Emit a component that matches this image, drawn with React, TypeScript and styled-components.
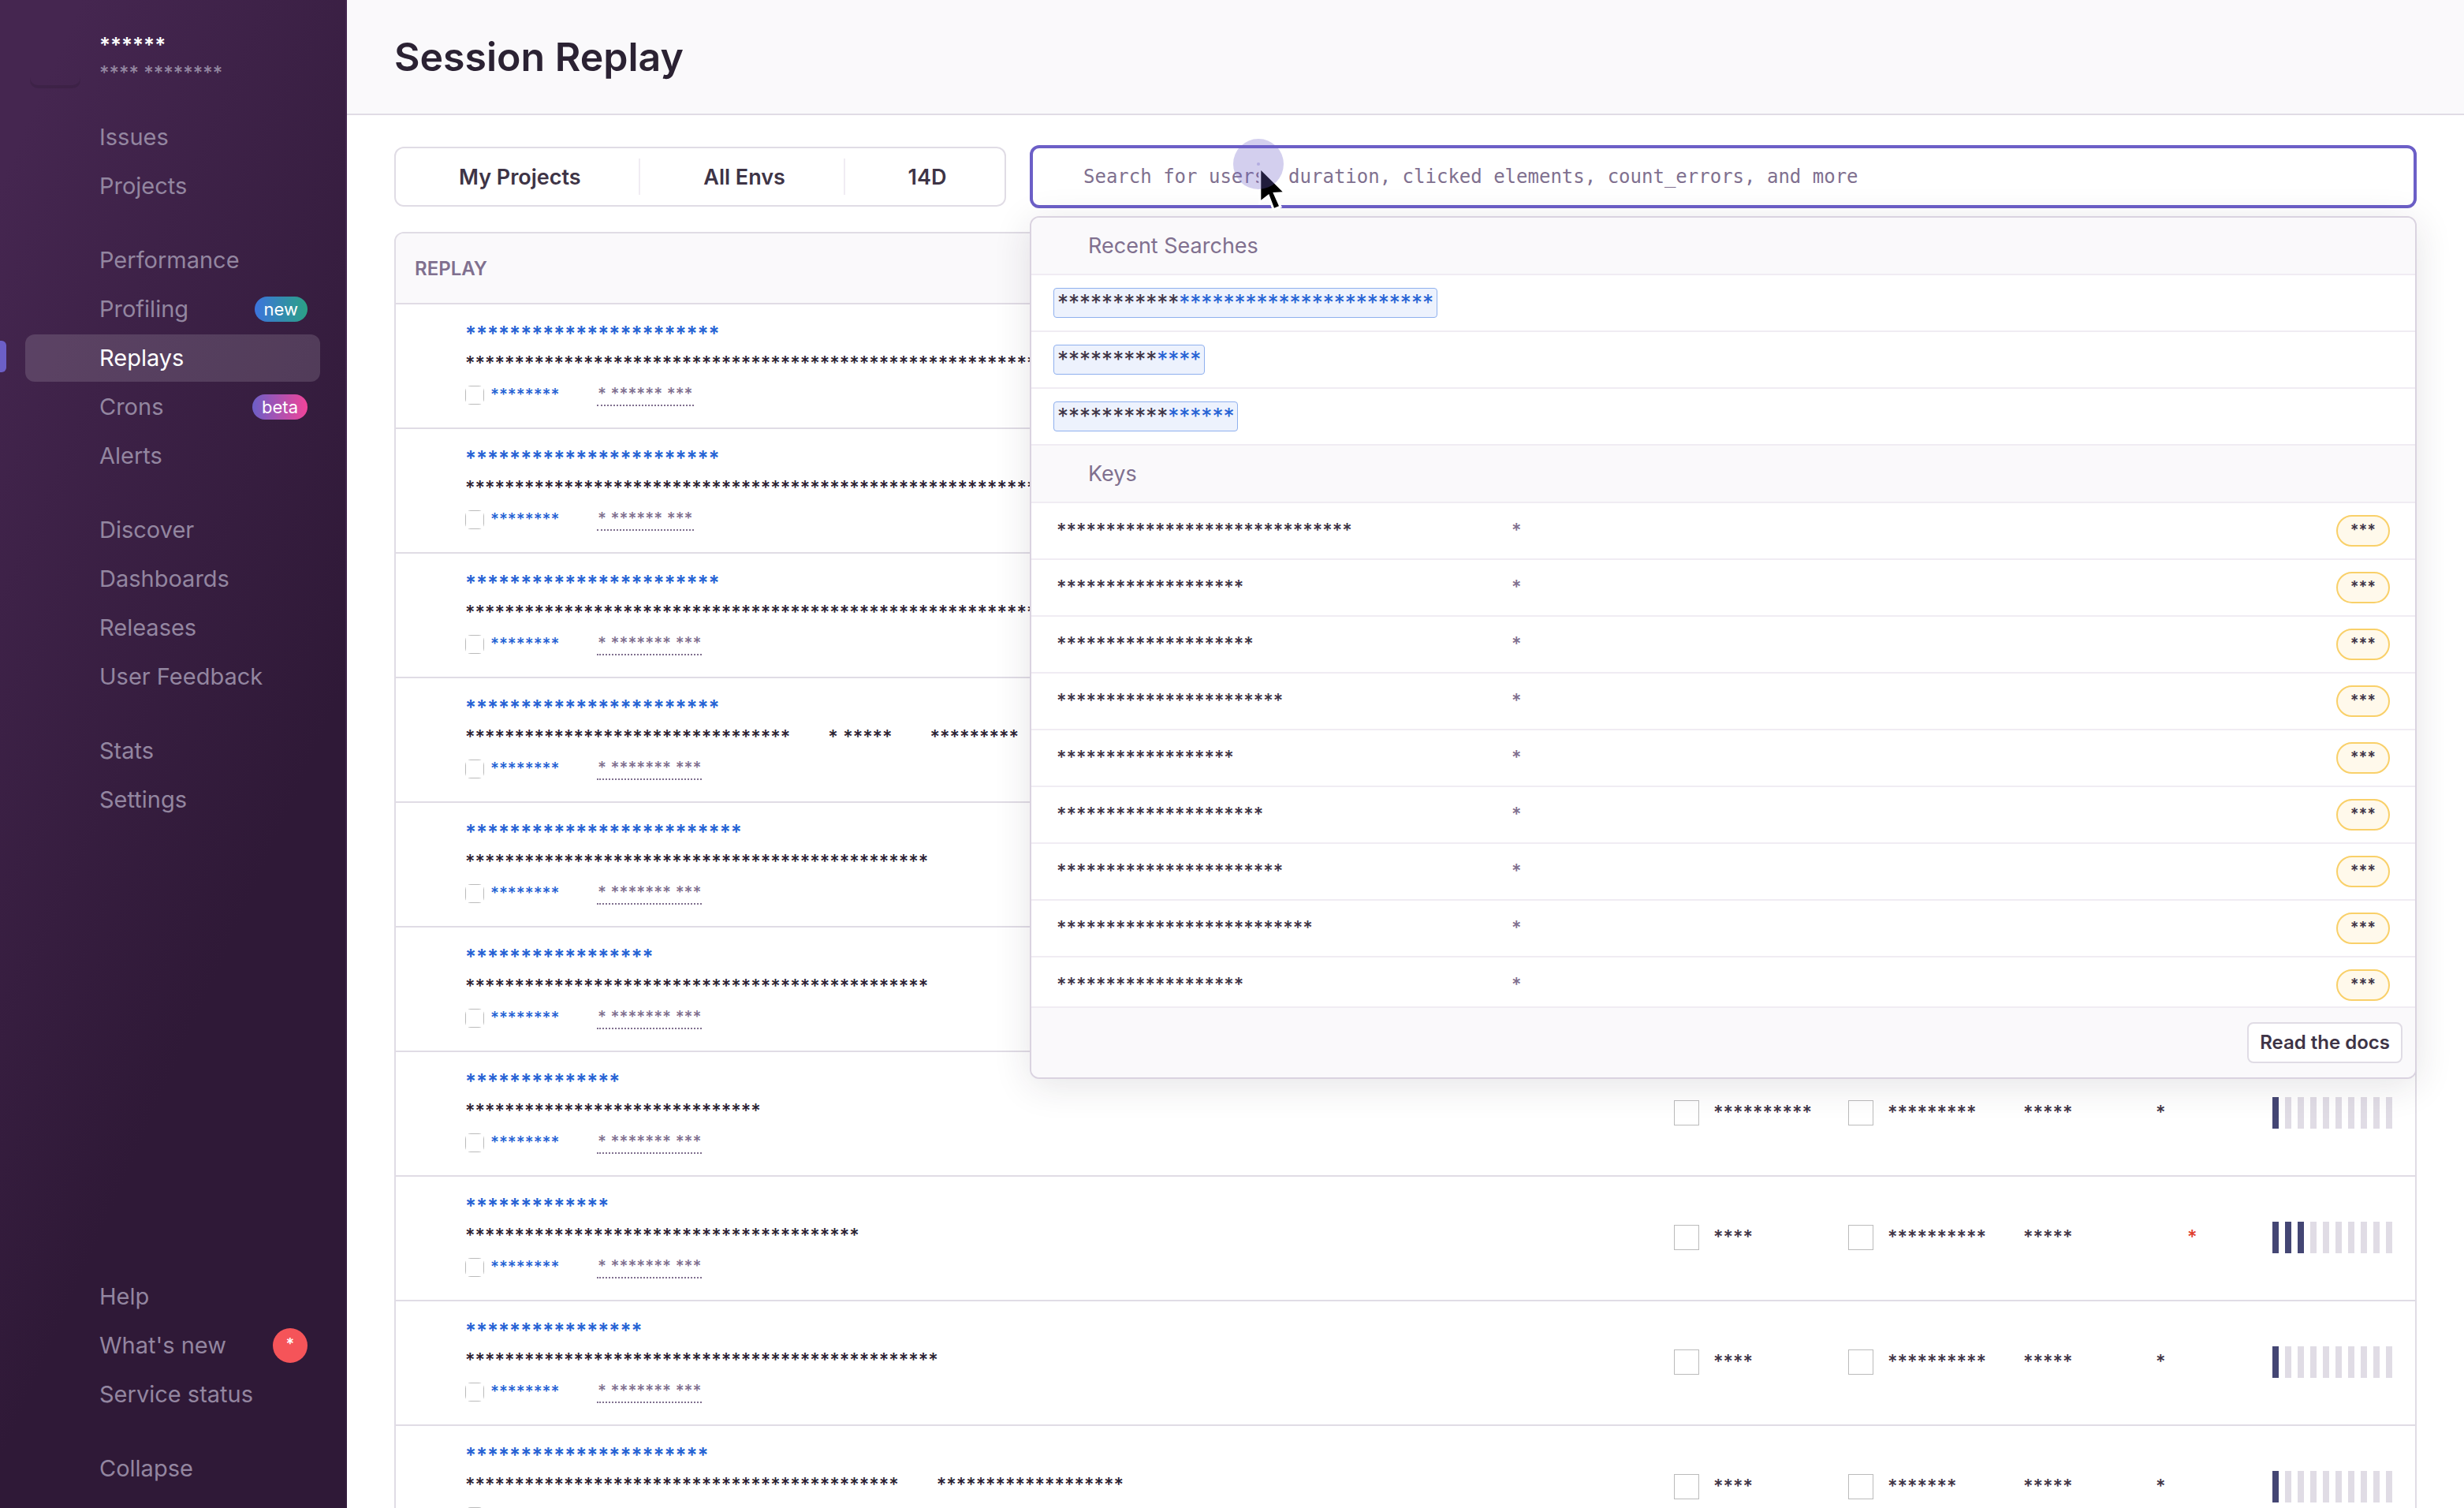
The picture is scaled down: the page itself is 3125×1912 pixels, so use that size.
import React from 'react';
import styled, { createGlobalStyle, css } from 'styled-components';

const sans = `Inter, "Open Sans", sans-serif`;
const mono = `"DejaVu Sans Mono", "Liberation Mono", monospace`;

const c = {
  border: '#e0dce5',
  innerBorder: '#f0ecf3',
  surface: '#faf9fb',
  heading: '#2b2233',
  text: '#3e3446',
  sub: '#80708f',
  link: '#2562d4',
  purple: '#6c5fc7',
  nav: '#9386a0',
};

const GlobalStyle = createGlobalStyle`
  *, *::before, *::after { box-sizing: border-box; }
  body { margin: 0; background: #fff; color: ${c.text}; font-family: ${sans}; }
  button, input { font: inherit; color: inherit; }
  a { color: inherit; text-decoration: none; }
  p, h1, h2, ul { margin: 0; padding: 0; }
`;

const Shell = styled.div`
  display: flex;
  height: 100vh;
  overflow: hidden;
`;

/* Sidebar */

const Sidebar = styled.aside`
  flex: 0 0 440px;
  display: flex;
  flex-direction: column;
  padding-bottom: 20px;
  border-right: 2px solid #45265044;
  background: linear-gradient(294deg, #2f1937 36%, #452650 92%);
`;

const Org = styled.div`
  display: flex;
  gap: 24px;
  height: 144px;
  padding: 36px 38px 0;
`;

const OrgAvatar = styled.div`
  width: 64px;
  height: 64px;
  margin-top: 8px;
  border-radius: 10px;
  box-shadow: 0 4px 0 rgba(0, 0, 0, 0.1);
`;

const NavGroup = styled.nav<{ $bottom?: boolean }>`
  display: flex;
  flex-direction: column;
  gap: 2px;
  padding: 0 32px;
  margin-bottom: 34px;
  ${(p) => p.$bottom && css`margin-top: auto;`}
  &:last-child { margin-bottom: 0; }
`;

const NavLink = styled.a<{ $active?: boolean }>`
  position: relative;
  display: flex;
  align-items: center;
  justify-content: space-between;
  height: 60px;
  padding: 0 16px 0 94px;
  border-radius: 12px;
  font-size: 29px;
  line-height: 36px;
  color: ${(p) => (p.$active ? '#fff' : c.nav)};
  background: ${(p) => (p.$active ? 'rgba(255, 255, 255, 0.14)' : 'transparent')};
  ${(p) => p.$active && css`
    &::before {
      content: '';
      position: absolute;
      left: -32px;
      top: 8px;
      width: 8px;
      height: 40px;
      border-radius: 0 6px 6px 0;
      background: ${c.purple};
    }
  `}
`;

const Badge = styled.span<{ $kind: 'new' | 'beta' }>`
  padding: 0 12px;
  border-radius: 16px;
  font-size: 22px;
  line-height: 32px;
  color: #fff;
  background: ${(p) => (p.$kind === 'new'
    ? 'linear-gradient(90deg, #3c74dd, #2ba185)'
    : 'linear-gradient(90deg, #6c5fc7, #f14499)')};
`;

const Count = styled.span`
  width: 44px;
  height: 44px;
  border-radius: 22px;
  font-size: 20px;
  font-weight: 600;
  line-height: 40px;
  text-align: center;
  color: #fff;
  background: #f55459;
`;

/* Masked text */

const Stars = styled.span<{ $size?: number; $weight?: number; $color?: string; $line?: number }>`
  font-size: ${(p) => p.$size ?? 24}px;
  font-weight: ${(p) => p.$weight ?? 500};
  line-height: ${(p) => p.$line ?? 38}px;
  color: ${(p) => p.$color ?? c.text};
  white-space: pre;
`;

/* Page */

const Main = styled.main`
  flex: 1;
  min-width: 0;
`;

const PageHeader = styled.header`
  display: flex;
  align-items: center;
  height: 146px;
  padding: 0 60px;
  border-bottom: 2px solid ${c.border};
  background: ${c.surface};
`;

const Title = styled.h1`
  font-size: 50px;
  font-weight: 600;
  line-height: 60px;
  color: ${c.heading};
`;

const Body = styled.div`
  padding: 38px 60px 0;
`;

const Controls = styled.div`
  display: flex;
  align-items: center;
  gap: 30px;
  margin-bottom: 30px;
`;

const FilterBar = styled.div`
  flex: 0 0 776px;
  display: flex;
  align-items: center;
  height: 76px;
  border: 2px solid ${c.border};
  border-radius: 12px;
`;

const FilterButton = styled.button`
  flex: 1 1 auto;
  height: 100%;
  padding: 0 68px 0 80px;
  border: 0;
  background: none;
  font-size: 27px;
  font-weight: 600;
  text-align: left;
  white-space: nowrap;
`;

const Divider = styled.span`
  width: 2px;
  height: 46px;
  background: ${c.innerBorder};
`;

const SearchBox = styled.div`
  position: relative;
  flex: 1;
`;

const SearchInput = styled.input`
  display: block;
  width: 100%;
  height: 80px;
  padding: 0 64px;
  border: 4px solid ${c.purple};
  border-radius: 12px;
  outline: 0;
  background: #fff;
  font-family: ${mono};
  font-size: 24px;
  &::placeholder { color: ${c.sub}; opacity: 1; }
`;

const Pointer = styled.svg`
  position: absolute;
  z-index: 3;
  left: 258px;
  top: -8px;
  width: 72px;
  height: 96px;
  pointer-events: none;
`;

const Dropdown = styled.div`
  position: absolute;
  z-index: 2;
  top: 90px;
  left: 0;
  right: 0;
  overflow: hidden;
  border: 2px solid #dad3e0;
  border-radius: 12px;
  background: #fff;
  box-shadow: 0 8px 48px rgba(43, 34, 51, 0.12);
`;

const Results = styled.div`
  max-height: 1000px;
  overflow: hidden;
`;

const GroupTitle = styled.h2`
  height: 73px;
  padding: 0 72px;
  border-bottom: 2px solid ${c.innerBorder};
  background: ${c.surface};
  font-size: 27px;
  font-weight: 400;
  line-height: 71px;
  color: ${c.sub};
`;

const List = styled.ul`
  list-style: none;
`;

const ResultRow = styled.li`
  display: grid;
  grid-template-columns: 577px 1fr auto;
  align-items: center;
  height: 72px;
  padding: 0 32px;
  border-bottom: 2px solid ${c.innerBorder};
`;

const RecentRow = styled.li`
  display: flex;
  align-items: center;
  height: 72px;
  padding: 0 28px;
  border-bottom: 2px solid ${c.innerBorder};
`;

const Token = styled.span`
  padding: 0 4px;
  border: 1px solid #8fb0ee;
  border-radius: 4px;
  background: #edf2fd;
  font-size: 28px;
  line-height: 36px;
  color: ${c.text};
  b { font-weight: 400; color: ${c.link}; }
`;

const Tag = styled.span`
  height: 40px;
  padding: 0 16px;
  border: 2px solid #f9d069;
  border-radius: 20px;
  background: #fff9eb;
  font-size: 20px;
  font-weight: 600;
  line-height: 34px;
`;

const DropdownFooter = styled.div`
  display: flex;
  justify-content: flex-end;
  padding: 18px 16px;
  border-top: 2px solid ${c.innerBorder};
  background: ${c.surface};
`;

const DocsButton = styled.a`
  padding: 0 14px;
  border: 2px solid ${c.border};
  border-radius: 8px;
  background: #fff;
  font-size: 24px;
  font-weight: 600;
  line-height: 48px;
`;

/* Replay table */

const TableFrame = styled.div`
  overflow: hidden;
  border: 2px solid ${c.border};
  border-radius: 12px 12px 0 0;
`;

const Table = styled.table`
  width: 100%;
  table-layout: fixed;
  border-collapse: separate;
  border-spacing: 0;
`;

const Th = styled.th<{ $w?: number }>`
  ${(p) => p.$w && css`width: ${p.$w}px;`}
  height: 90px;
  padding: 0 24px;
  border-bottom: 2px solid ${c.border};
  background: ${c.surface};
  font-size: 24px;
  font-weight: 600;
  text-align: left;
  color: ${c.sub};
`;

const Td = styled.td`
  height: 158px;
  padding: 0 24px 2px;
  border-bottom: 2px solid ${c.border};
  vertical-align: middle;
`;

const Replay = styled.div`
  display: flex;
  flex-direction: column;
  align-items: flex-start;
  padding-left: 64px;
`;

const Line = styled.div<{ $gap: number; $h: number }>`
  display: flex;
  align-items: center;
  gap: ${(p) => p.$gap}px;
  height: ${(p) => p.$h}px;
`;

const ProjectMark = styled.span`
  width: 24px;
  height: 24px;
  margin-right: 8px;
  border-radius: 7px;
  overflow: hidden;
  &::before {
    content: '';
    display: block;
    height: 100%;
    border: 1px solid #bbb;
  }
`;

const Project = styled.span`
  display: flex;
  align-items: center;
  width: 143px;
`;

const When = styled.time`
  padding: 0 1px;
  border-bottom: 2px dotted ${c.sub};
  font-size: 21px;
  font-weight: 500;
  line-height: 26px;
  color: ${c.sub};
`;

const Device = styled.span`
  display: flex;
  align-items: center;
  gap: 18px;
`;

const DeviceIcon = styled.span`
  flex: none;
  width: 32px;
  height: 32px;
  border: 1px solid #bbb;
`;

const Errors = styled.span<{ $alert?: boolean }>`
  display: block;
  padding-left: ${(p) => (p.$alert ? 40 : 0)}px;
`;

const Meter = styled.div`
  display: flex;
  gap: 8px;
`;

const Bar = styled.span<{ $on: boolean }>`
  width: 8px;
  height: 40px;
  background: ${(p) => (p.$on ? '#444674' : c.border)};
`;

type Row = {
  title: number;
  parts: string[];
  when: string;
  os: number;
  browser: number;
  alert?: boolean;
  activity: number;
};

const s = (n: number) => '*'.repeat(n);
const short = '* ****** ***';
const long = '* ******* ***';

const rows: Row[] = [
  { title: 23, parts: [s(58)], when: short, os: 4, browser: 10, activity: 1 },
  { title: 23, parts: [s(58)], when: short, os: 4, browser: 10, activity: 1 },
  { title: 23, parts: [s(58)], when: long, os: 4, browser: 10, activity: 1 },
  { title: 23, parts: [s(33), '* *****', s(9)], when: long, os: 4, browser: 10, activity: 1 },
  { title: 25, parts: [s(47)], when: long, os: 4, browser: 10, activity: 1 },
  { title: 17, parts: [s(47)], when: long, os: 4, browser: 10, activity: 1 },
  { title: 14, parts: [s(30)], when: long, os: 10, browser: 9, activity: 1 },
  { title: 13, parts: [s(40)], when: long, os: 4, browser: 10, alert: true, activity: 3 },
  { title: 16, parts: [s(48)], when: long, os: 4, browser: 10, activity: 1 },
  { title: 22, parts: [s(44), s(19)], when: long, os: 4, browser: 7, activity: 1 },
];

const recent = [[11, 23], [9, 4], [10, 6]];
const keys = [30, 19, 20, 23, 18, 21, 23, 26, 19];

type NavEntry = { label: string; badge?: 'new' | 'beta'; count?: string; active?: boolean };

const groups: NavEntry[][] = [
  [{ label: 'Issues' }, { label: 'Projects' }],
  [
    { label: 'Performance' },
    { label: 'Profiling', badge: 'new' },
    { label: 'Replays', active: true },
    { label: 'Crons', badge: 'beta' },
    { label: 'Alerts' },
  ],
  [{ label: 'Discover' }, { label: 'Dashboards' }, { label: 'Releases' }, { label: 'User Feedback' }],
  [{ label: 'Stats' }, { label: 'Settings' }],
];

const bottomGroups: NavEntry[][] = [
  [{ label: 'Help' }, { label: "What's new", count: '*' }, { label: 'Service status' }],
  [{ label: 'Collapse' }],
];

function Group({ entries, bottom }: { entries: NavEntry[]; bottom?: boolean }) {
  return (
    <NavGroup $bottom={bottom}>
      {entries.map((e) => (
        <NavLink key={e.label} href="#" $active={e.active}>
          {e.label}
          {e.badge && <Badge $kind={e.badge}>{e.badge}</Badge>}
          {e.count && <Count>{e.count}</Count>}
        </NavLink>
      ))}
    </NavGroup>
  );
}

function ReplayRow({ row }: { row: Row }) {
  return (
    <tr>
      <Td>
        <Replay>
          <Stars as="a" href="#" $size={26} $weight={600} $color={c.link}>{s(row.title)}</Stars>
          <Line $gap={48} $h={38}>
            {row.parts.map((p, i) => <Stars key={i} $color={c.heading}>{p}</Stars>)}
          </Line>
          <Line $gap={24} $h={42}>
            <Project>
              <ProjectMark />
              <Stars as="a" href="#" $size={21} $color={c.link}>{s(8)}</Stars>
            </Project>
            <When>{row.when}</When>
          </Line>
        </Replay>
      </Td>
      <Td><Device><DeviceIcon /><Stars>{s(row.os)}</Stars></Device></Td>
      <Td><Device><DeviceIcon /><Stars>{s(row.browser)}</Stars></Device></Td>
      <Td><Stars>{s(5)}</Stars></Td>
      <Td>
        <Errors $alert={row.alert}>
          <Stars $color={row.alert ? '#e03e2f' : c.text}>*</Stars>
        </Errors>
      </Td>
      <Td>
        <Meter>
          {Array.from({ length: 10 }, (_, i) => <Bar key={i} $on={i < row.activity} />)}
        </Meter>
      </Td>
    </tr>
  );
}

export default function App() {
  return (
    <>
      <GlobalStyle />
      <Shell>
        <Sidebar>
          <Org>
            <OrgAvatar />
            <div>
              <Stars as="p" $size={26} $weight={600} $color="#fff" $line={42}>{s(6)}</Stars>
              <Stars as="p" $color={c.nav} $line={30}>{'**** ********'}</Stars>
            </div>
          </Org>
          {groups.map((g, i) => <Group key={i} entries={g} />)}
          {bottomGroups.map((g, i) => <Group key={i} entries={g} bottom={i === 0} />)}
        </Sidebar>
        <Main>
          <PageHeader><Title>Session Replay</Title></PageHeader>
          <Body>
            <Controls>
              <FilterBar>
                <FilterButton type="button">My Projects</FilterButton>
                <Divider />
                <FilterButton type="button">All Envs</FilterButton>
                <Divider />
                <FilterButton type="button">14D</FilterButton>
              </FilterBar>
              <SearchBox>
                <SearchInput
                  type="text"
                  aria-label="Search replays"
                  placeholder="Search for users, duration, clicked elements, count_errors, and more"
                />
                <Pointer viewBox="0 0 72 96" aria-hidden="true">
                  <path
                    d="M35.3 40 L35.3 77.7 L45.3 70 L52 87.7 L58 85.3 L50.3 68 L62.7 67.3 Z"
                    fill="#000"
                    stroke="#fff"
                    strokeWidth="6"
                    paintOrder="stroke"
                  />
                  <circle cx="32" cy="32" r="32" fill="#6c5fc7" fillOpacity="0.3" />
                  <circle cx="32" cy="32" r="2" fill="#6c5fc7" fillOpacity="0.3" />
                </Pointer>
                <Dropdown>
                  <Results>
                    <GroupTitle>Recent Searches</GroupTitle>
                    <List>
                      {recent.map(([a, b]) => (
                        <RecentRow key={a}><Token>{s(a)}<b>{s(b)}</b></Token></RecentRow>
                      ))}
                    </List>
                    <GroupTitle>Keys</GroupTitle>
                    <List>
                      {keys.map((n, i) => (
                        <ResultRow key={i}>
                          <Stars>{s(n)}</Stars>
                          <Stars $color={c.sub}>*</Stars>
                          <Tag>***</Tag>
                        </ResultRow>
                      ))}
                    </List>
                  </Results>
                  <DropdownFooter><DocsButton href="#">Read the docs</DocsButton></DropdownFooter>
                </Dropdown>
              </SearchBox>
            </Controls>
            <TableFrame>
              <Table>
                <thead>
                  <tr>
                    <Th scope="col">REPLAY</Th>
                    <Th scope="col" $w={221} aria-label="Operating system" />
                    <Th scope="col" $w={222} aria-label="Browser" />
                    <Th scope="col" $w={168} aria-label="Duration" />
                    <Th scope="col" $w={148} aria-label="Errors" />
                    <Th scope="col" $w={205} aria-label="Activity" />
                  </tr>
                </thead>
                <tbody>
                  {rows.map((r, i) => <ReplayRow key={i} row={r} />)}
                </tbody>
              </Table>
            </TableFrame>
          </Body>
        </Main>
      </Shell>
    </>
  );
}
